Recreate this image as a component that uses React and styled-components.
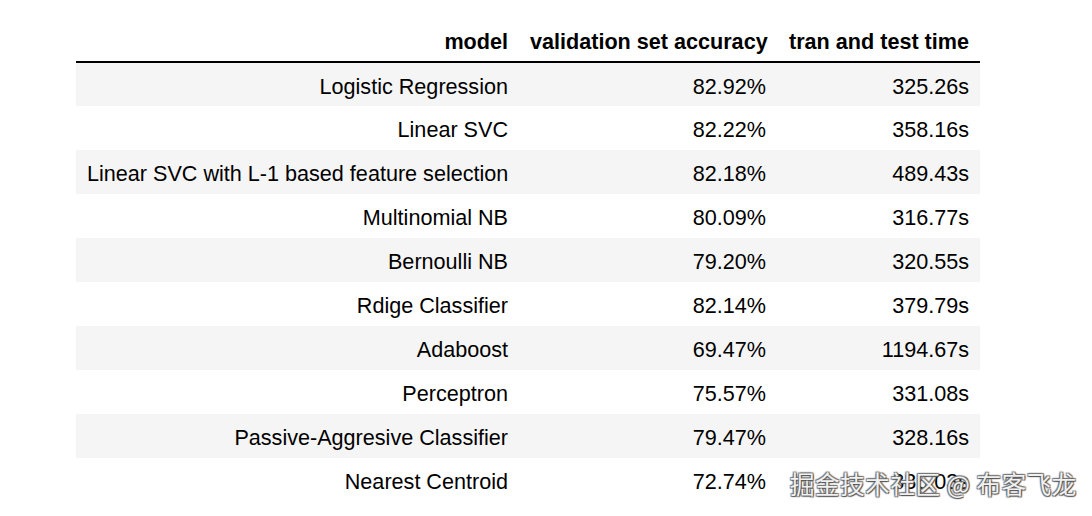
import React from 'react';
import styled, { createGlobalStyle } from 'styled-components';

const GlobalStyle = createGlobalStyle`
  body {
    margin: 0;
    background: #ffffff;
    font-family: 'Liberation Sans', Arial, Helvetica, sans-serif;
  }
`;

const Page = styled.div`
  position: relative;
  width: 1092px;
  height: 516px;
  padding: 20px 0 0 76px;
  box-sizing: border-box;
  overflow: hidden;
`;

const Table = styled.table`
  border-collapse: collapse;
  border-spacing: 0;
  table-layout: fixed;
  width: 904px;
  color: #000;
  font-size: 21.6px;
`;

const HeadCell = styled.th`
  height: 42px;
  padding: 2px 11px 0;
  text-align: right;
  font-weight: 700;
  vertical-align: middle;
  border-bottom: 2px solid #000;
  white-space: nowrap;
  width: ${(p) => p.$w}px;
  box-sizing: border-box;
`;

const Row = styled.tr`
  background: ${(p) => (p.$odd ? '#f5f5f5' : '#ffffff')};
`;

const Cell = styled.td`
  height: 44px;
  padding: 4px 11px 0;
  box-sizing: border-box;
  text-align: right;
  vertical-align: middle;
  white-space: nowrap;
`;

const Watermark = styled.div`
  position: absolute;
  left: 790px;
  top: 466px;
  font-family: 'Noto Sans CJK SC', 'Liberation Sans', sans-serif;
  font-size: 24.5px;
  letter-spacing: 0.6px;
  color: rgba(255, 255, 255, 0.92);
  text-shadow: 1px 1px 1px #555, -1px -1px 1px #777, 1px -1px 1px #777, -1px 1px 1px #777;
  white-space: nowrap;
`;

const rows = [
  ['Logistic Regression', '82.92%', '325.26s'],
  ['Linear SVC', '82.22%', '358.16s'],
  ['Linear SVC with L-1 based feature selection', '82.18%', '489.43s'],
  ['Multinomial NB', '80.09%', '316.77s'],
  ['Bernoulli NB', '79.20%', '320.55s'],
  ['Rdige Classifier', '82.14%', '379.79s'],
  ['Adaboost', '69.47%', '1194.67s'],
  ['Perceptron', '75.57%', '331.08s'],
  ['Passive-Aggresive Classifier', '79.47%', '328.16s'],
  ['Nearest Centroid', '72.74%', '336.03s'],
];

const App = () => {
  return (
    <>
      <GlobalStyle />
      <Page>
        <Table>
          <thead>
            <tr>
              <HeadCell $w={443}>model</HeadCell>
              <HeadCell $w={258}>validation set accuracy</HeadCell>
              <HeadCell $w={203}>tran and test time</HeadCell>
            </tr>
          </thead>
          <tbody>
            {rows.map((r, i) => (
              <Row key={r[0]} $odd={i % 2 === 0}>
                <Cell>{r[0]}</Cell>
                <Cell>{r[1]}</Cell>
                <Cell>{r[2]}</Cell>
              </Row>
            ))}
          </tbody>
        </Table>
        <Watermark>掘金技术社区 @ 布客飞龙</Watermark>
      </Page>
    </>
  );
};

export default App;
